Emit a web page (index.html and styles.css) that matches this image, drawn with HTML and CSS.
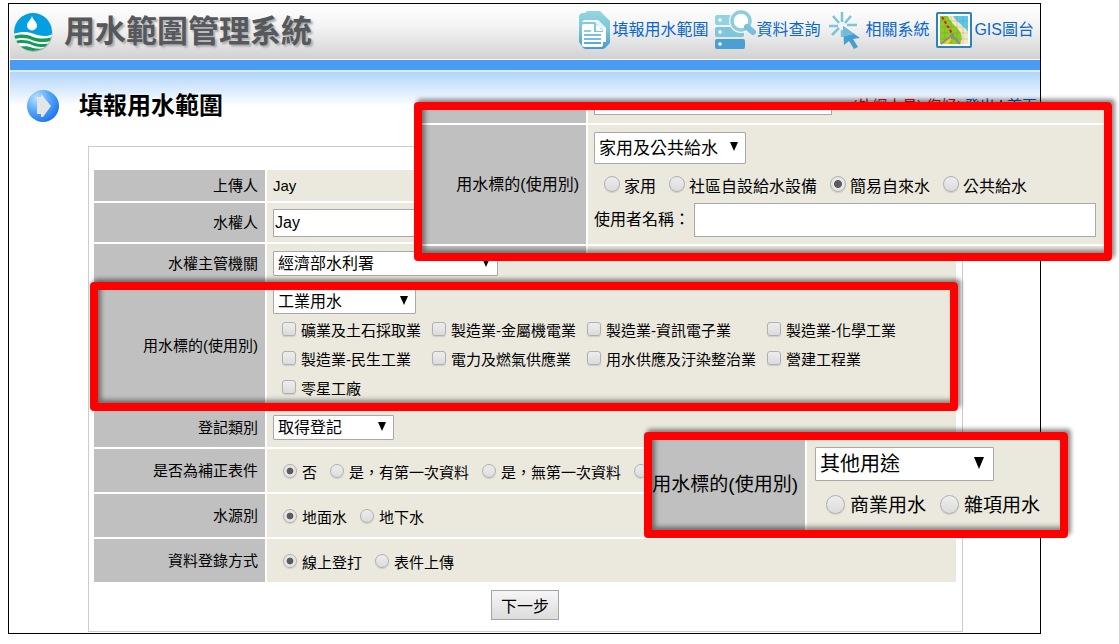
FILE: index.html
```html
<!DOCTYPE html>
<html lang="zh-Hant">
<head>
<meta charset="utf-8">
<meta name="viewport" content="width=device-width, initial-scale=1">
<title>用水範圍管理系統</title>
<link rel="stylesheet" href="styles.css">
</head>
<body>
<div class="page">
  <header class="header">
    <div class="brand">
      <svg class="brand-logo" viewBox="0 0 40 40" aria-hidden="true">
        <defs><clipPath id="disc"><circle cx="20" cy="20" r="19"/></clipPath></defs>
        <circle cx="20.500" cy="21" r="19" fill="#b5b5b5"/>
        <g clip-path="url(#disc)">
          <rect width="40" height="40" fill="#fff"/>
          <path d="M0 0h40v22c-7 3-13 2-19 0C13 19 8 20 0 22z" fill="#049fe0"/>
          <path d="M0 24c8-2 13-2 20 1 7 2 13 2 20 0v3.500c-7 2-13 2-20 0-7-3-12-3-20-1z" fill="#149c5a"/>
          <path d="M0 29.500c8-2 13-2 20 1 7 2 13 2 20 0v3c-7 2-13 2-20 0-7-3-12-3-20-1z" fill="#149c5a"/>
          <path d="M4 35c7-1 11-1 16 1 4 1 8 1 12 0v5H4z" fill="#149c5a"/>
          <path d="M19 4c1 4 5 6 5 9.500a5 5 0 0 1-10 0c0-3.500 4-5.500 5-9.500z" fill="#fff"/>
        </g>
      </svg>
      <span class="brand-name">用水範圍管理系統</span>
    </div>
    <nav class="menu">
      <a class="menu-item" href="#report">
        <svg class="icon-docs" viewBox="0 0 34 40" aria-hidden="true">
          <defs><linearGradient id="ink" x1="0" y1="0" x2="0" y2="40" gradientUnits="userSpaceOnUse"><stop offset="0" stop-color="#97d6de"/><stop offset=".5" stop-color="#7cc5dc"/><stop offset="1" stop-color="#3f97d2"/></linearGradient></defs>
          <path d="M10 1h12l10 10v22l-5 5q-1 1-3 1H8q-3 0-4-3l-3-4V7q0-3 3-4h3q1-2 3-2z" fill="url(#ink)"/>
          <path d="M7 10h13l8 8v14h-3V20l-8-8H4q1-2 3-2z" fill="#fff"/>
          <path d="M20 10v8h8z" fill="#e4f4f8"/>
          <path d="M6 14h10v8h9v13q0 2-2 2H6q-2 0-2-2V16q0-2 2-2z" fill="#fff"/>
          <path d="M18 14l7 7h-7z" fill="#fff"/>
          <path d="M6 21h7" stroke="#8ccfdd" stroke-width="2"/>
          <path d="M6 25h17M6 29h17" stroke="#78c0da" stroke-width="2"/>
          <path d="M6 33h17" stroke="#5cabd6" stroke-width="2"/>
        </svg>
        <span>填報用水範圍</span>
      </a>
      <a class="menu-item" href="#search">
        <svg class="icon-search" viewBox="0 0 41 40" aria-hidden="true">
          <rect x="0" y="5" width="20" height="10" rx="2" fill="#93d3df"/>
          <rect x="0" y="17" width="29" height="10" rx="2" fill="#7fc5dc"/>
          <rect x="0" y="29" width="30" height="10" rx="2" fill="#4ba0d3"/>
          <circle cx="5" cy="10" r="1.800" fill="#fff"/><circle cx="5" cy="22" r="1.800" fill="#fff"/><circle cx="5" cy="34" r="1.800" fill="#fff"/>
          <circle cx="26" cy="11" r="12" fill="#f7f7f7"/>
          <circle cx="26" cy="11" r="9" fill="#fff" stroke="#8bcede" stroke-width="3.500"/>
          <path d="M32 17l6 5" stroke="#78c0dc" stroke-width="6" stroke-linecap="round"/>
        </svg>
        <span>資料查詢</span>
      </a>
      <a class="menu-item menu-item-spaced" href="#systems">
        <svg class="icon-pointer" viewBox="0 0 32 40" aria-hidden="true">
          <path d="M13 2v10M4 6l6 7M22 6l-6 7M0 16h9M18 15h10M10 18l-7 7M13 20v7" stroke="#7cc5da" stroke-width="2.500" fill="none"/>
          <path d="M14 16l17 12-7 1 5 8-4 2-5-8-5 4z" fill="#469dd0"/>
          <path d="M14 16l11 8-11 3z" fill="#70bddb"/>
        </svg>
        <span>相關系統</span>
      </a>
      <a class="menu-item" href="#gis">
        <svg class="icon-map" viewBox="0 0 36 36" aria-hidden="true">
          <rect x="1" y="1" width="34" height="34" rx="1" fill="#fff" stroke="#2d83b3" stroke-width="2"/>
          <rect x="4" y="4" width="28" height="28" fill="#8bcb23"/>
          <path d="M12 4h20v28h-8c3-6 2-10-2-15-4-4-8-8-10-13z" fill="#f7e6c2"/>
          <path d="M17 4h15v16c-3-6-11-9-15-16z" fill="#5bc8ee"/>
          <path d="M4 32l10-9 3 3-5 6z" fill="#f3d32b"/>
          <path d="M9 4v28M15 4v28M21 4v28M27 4v28M4 9h28M4 15h28M4 21h28M4 27h28" stroke="#3a7b62" stroke-opacity=".2"/>
          <path d="M6 5l11 18" stroke="#e01b1b" stroke-width="2" stroke-dasharray="3 2"/>
          <path d="M5 32l11-9 8 9M16 23v4" fill="none" stroke="#8d8c86" stroke-width="2"/>
        </svg>
        <span>GIS圖台</span>
      </a>
    </nav>
  </header>
  <div class="bar"></div>

  <main class="main">
    <div class="title-row">
      <svg class="title-icon" viewBox="0 0 34 34" aria-hidden="true">
        <defs><radialGradient id="ball" cx=".3" cy=".25" r=".8"><stop offset="0" stop-color="#b8e2ff"/><stop offset=".5" stop-color="#59a8fb"/><stop offset="1" stop-color="#1e76ee"/></radialGradient></defs>
        <circle cx="17" cy="17" r="16" fill="url(#ball)"/>
        <path d="M11 8h4V5l10 12-8 11h-2v-3h-4z" fill="#e3e5e8"/>
      </svg>
      <h1 class="title">填報用水範圍</h1>
      <p class="user"><span class="user-name">(外網人員) 您好!</span> <a href="#logout">登出</a> | <a href="#home">首頁</a></p>
    </div>

    <form class="form">
      <div class="rows">
        <div class="row">
          <div class="label">上傳人</div>
          <div class="value">Jay</div>
        </div>
        <div class="row row-input">
          <label class="label" for="owner">水權人</label>
          <div class="value"><input class="text" id="owner" type="text" value="Jay"></div>
        </div>
        <div class="row row-input">
          <label class="label" for="agency">水權主管機關</label>
          <div class="value"><span class="select select-l"><select id="agency"><option>經濟部水利署</option></select></span></div>
        </div>
        <div class="row row-marked">
          <label class="label" for="usage">用水標的(使用別)</label>
          <div class="value value-stack">
            <span class="select select-m"><select id="usage"><option>工業用水</option></select></span>
            <div class="checks">
              <label class="option"><input type="checkbox"><span>礦業及土石採取業</span></label>
              <label class="option"><input type="checkbox"><span>製造業-金屬機電業</span></label>
              <label class="option"><input type="checkbox"><span>製造業-資訊電子業</span></label>
              <label class="option"><input type="checkbox"><span>製造業-化學工業</span></label>
              <label class="option"><input type="checkbox"><span>製造業-民生工業</span></label>
              <label class="option"><input type="checkbox"><span>電力及燃氣供應業</span></label>
              <label class="option"><input type="checkbox"><span>用水供應及汙染整治業</span></label>
              <label class="option"><input type="checkbox"><span>營建工程業</span></label>
              <label class="option"><input type="checkbox"><span>零星工廠</span></label>
            </div>
          </div>
        </div>
        <div class="row row-input">
          <label class="label" for="regtype">登記類別</label>
          <div class="value"><span class="select select-s"><select id="regtype"><option>取得登記</option></select></span></div>
        </div>
        <div class="row row-radio">
          <div class="label">是否為補正表件</div>
          <div class="value options">
            <label class="option"><input type="radio" name="fix" checked><span>否</span></label>
            <label class="option"><input type="radio" name="fix"><span>是，有第一次資料</span></label>
            <label class="option"><input type="radio" name="fix"><span>是，無第一次資料</span></label>
            <label class="option"><input type="radio" name="fix" aria-label="其他"></label>
          </div>
        </div>
        <div class="row row-radio">
          <div class="label">水源別</div>
          <div class="value options">
            <label class="option"><input type="radio" name="source" checked><span>地面水</span></label>
            <label class="option"><input type="radio" name="source"><span>地下水</span></label>
          </div>
        </div>
        <div class="row row-radio">
          <div class="label">資料登錄方式</div>
          <div class="value options">
            <label class="option"><input type="radio" name="entry" checked><span>線上登打</span></label>
            <label class="option"><input type="radio" name="entry"><span>表件上傳</span></label>
          </div>
        </div>
      </div>
      <button class="next" type="button">下一步</button>
    </form>
  </main>

  <section class="callout callout-home">
    <div class="strip strip-top"><div class="label"></div><div class="value"><div class="cut-field"></div></div></div>
    <div class="callout-row">
      <label class="label" for="usage-home">用水標的(使用別)</label>
      <div class="value value-stack">
        <span class="select"><select id="usage-home"><option>家用及公共給水</option></select></span>
        <div class="options">
          <label class="option"><input type="radio" name="home"><span>家用</span></label>
          <label class="option"><input type="radio" name="home"><span>社區自設給水設備</span></label>
          <label class="option"><input type="radio" name="home" checked><span>簡易自來水</span></label>
          <label class="option"><input type="radio" name="home"><span>公共給水</span></label>
        </div>
        <div class="field"><label for="username">使用者名稱：</label><input class="text" id="username" type="text"></div>
      </div>
    </div>
    <div class="strip strip-bottom"><div class="label"></div><div class="value"></div></div>
  </section>

  <section class="callout callout-other">
    <div class="callout-row">
      <label class="label" for="usage-other">用水標的(使用別)</label>
      <div class="value value-stack">
        <span class="select"><select id="usage-other"><option>其他用途</option></select></span>
        <div class="options">
          <label class="option"><input type="radio" name="other"><span>商業用水</span></label>
          <label class="option"><input type="radio" name="other"><span>雜項用水</span></label>
        </div>
      </div>
    </div>
  </section>
</div>
</body>
</html>
```
FILE: styles.css
```css
* { box-sizing: border-box; }

body {
  margin: 0;
  background: #fff;
  color: #000;
  font: 15px/20px "Liberation Sans", "Noto Sans CJK TC", sans-serif;
}

a { color: #0a5bb5; text-decoration: none; }

input, select, button { font-family: inherit; color: inherit; margin: 0; }

.page {
  position: relative;
  margin: 3px 78px 9px 8px;
  border: 1px solid #000;
}

/* Header */
.header {
  display: flex;
  justify-content: space-between;
  height: 55px;
  margin-left: 1px;
  padding: 0 6px 0 3px;
  background: linear-gradient(#fff, #f4f4f4 40%, #d2d2d2);
}

.brand { display: flex; align-items: center; gap: 11px; }
.brand-logo { width: 40px; height: 40px; }
.brand-name {
  color: #55585c;
  font-size: 31px;
  line-height: 40px;
  font-weight: 700;
  text-shadow: 2px 2px 2px #aaa;
}

.menu { display: flex; align-items: center; gap: 7px; padding-bottom: 3px; }
.menu-item {
  display: flex;
  align-items: center;
  color: #0a67cc;
  font-size: 16px;
  white-space: nowrap;
}
.menu-item-spaced { gap: 4px; margin-left: 2px; }
.icon-docs { width: 34px; height: 40px; }
.icon-search { width: 41px; height: 40px; }
.icon-pointer { width: 32px; height: 40px; }
.icon-map { width: 36px; height: 36px; margin-right: 2px; }

.bar {
  height: 13px;
  margin-left: 1px;
  border: solid #fff;
  border-width: 1px 0 2px;
  border-bottom-color: #dcecfd;
  background: #489cf5;
}

/* Content */
.main {
  margin-left: 1px;
  padding: 12px 3px 1px 16px;
  background: linear-gradient(#b0d5fb, #fff 34px) no-repeat;
}

.title-row { display: flex; align-items: center; height: 44px; }
.title-icon { width: 34px; height: 34px; }
.title { margin: 0 0 0 19px; font-size: 24px; line-height: 32px; }
.user { margin: 0 0 0 auto; white-space: nowrap; }
.user-name { color: #e01010; }

.form {
  display: flex;
  flex-direction: column;
  align-items: center;
  margin: 18px 74px 0 62px;
  padding: 23px 6px 11px 5px;
  border: 1px solid #ccc;
}

.rows { align-self: stretch; display: flex; flex-direction: column; gap: 2px; }

.row { display: grid; grid-template-columns: 171px 1fr; gap: 2px; min-height: 31px; }
.row-input { min-height: 39px; }
.row-radio { min-height: 43px; }

.label {
  display: flex;
  align-items: center;
  justify-content: flex-end;
  padding-right: 7px;
  background: #c0c0c0;
  white-space: nowrap;
}

.value {
  display: flex;
  align-items: center;
  min-width: 0;
  padding: 0 6px;
  background: #ebe9de;
}

.value-stack { flex-direction: column; align-items: flex-start; }

.row-marked { position: relative; min-height: 121px; }
.row-marked .value { padding-top: 4px; }

/* Controls */
.text {
  width: 225px;
  height: 28px;
  padding: 0 1px;
  border: 1px solid #a9a9a9;
  background: #fff;
  font-size: 16px;
}

.select { position: relative; display: inline-flex; height: 25px; font-size: 16px; }
.select select {
  appearance: none;
  width: 100%;
  padding: 0 4px;
  border: 1px solid #a9a9a9;
  border-radius: 1px;
  background: #fff;
  font-size: inherit;
}
.select::after {
  content: "";
  position: absolute;
  right: 8px;
  top: 7px;
  width: 8px;
  height: 9px;
  background: #000;
  clip-path: polygon(0 0, 100% 0, 50% 100%);
  pointer-events: none;
}
.select-l { width: 225px; }
.select-m { width: 143px; }
.select-s { width: 121px; }

.checks {
  display: grid;
  grid-template-columns: 150px 155px 180px auto;
  grid-auto-rows: 29px;
  padding-left: 9px;
}

.options { display: flex; align-items: center; gap: 13px; }
.row .options { padding-left: 16px; }

.option { display: flex; align-items: center; gap: 5px; white-space: nowrap; }
.option span { padding-top: 4px; }

.option input {
  appearance: none;
  flex: none;
  width: 14px;
  height: 14px;
  border: 1px solid #b0b0b0;
  border-radius: 3px;
  background: linear-gradient(#ededed, #dcdcdc);
  box-shadow: 0 1px 1px #ccc;
}
.option input[type="radio"] { border-radius: 50%; }
.option input[type="radio"]:checked {
  background: radial-gradient(circle, #5c5c5c 36%, #e6e6e6 44%);
}

.next {
  height: 30px;
  margin-top: 8px;
  padding: 0 9px;
  border: 1px solid #a5a5a5;
  background: linear-gradient(#f6f6f6, #dcdcdc);
  font-size: 16px;
}

/* Red frames */
.row-marked::after {
  content: "";
  position: absolute;
  inset: -3px -2px -5px -4px;
}
.row-marked::after,
.callout::after {
  border: 8px solid #f00;
  border-radius: 4px;
  box-shadow: 3px -3px 4px rgba(0, 0, 0, .45), inset 3px -3px 5px rgba(0, 0, 0, .45);
  pointer-events: none;
}

.callout {
  position: absolute;
  isolation: isolate;
  display: flex;
  flex-direction: column;
  gap: 2px;
  padding: 8px;
}
.callout::before { content: ""; position: absolute; inset: 8px; background: #fff; z-index: -1; }
.callout::after { content: ""; position: absolute; inset: 0; }

.callout-row, .strip { display: grid; gap: 2px; }

.callout-home { top: 98px; right: -72px; width: 698px; font-size: 16px; }
.callout-home .callout-row, .callout-home .strip { grid-template-columns: 164px 1fr; }
.callout-home .callout-row { min-height: 119px; }
.callout-home .value { padding: 0 8px 0 6px; }
.callout-home .value-stack { padding-top: 7px; }
.callout-home .select { height: 32px; width: 152px; font-size: 17px; }
.callout-home .select::after { top: 10px; }
.callout-home .options { height: 39px; padding-left: 10px; gap: 13px; }
.callout-home .option input { width: 16px; height: 16px; }
.callout-home .option { gap: 4px; }
.callout-home .option span { padding-top: 6px; }
.callout-home .field { display: flex; align-items: center; gap: 4px; align-self: stretch; }
.callout-home .text { flex: 1; width: auto; height: 34px; }
.strip-top { height: 13px; }
.strip-top .value { align-items: flex-start; }
.cut-field { width: 238px; height: 5px; border: 1px solid #a9a9a9; border-top: 0; background: #fff; }
.strip-bottom { height: 7px; }

.callout-other { top: 428px; right: -28px; width: 424px; font-size: 19px; }
.callout-other .callout-row { grid-template-columns: 153px 1fr; min-height: 90px; }
.callout-other .value { padding: 7px 8px 0; }
.callout-other .select { width: 179px; height: 34px; font-size: 20px; }
.callout-other .select::after { width: 10px; height: 12px; top: 10px; right: 10px; }
.callout-other .options { height: 46px; padding-left: 11px; gap: 14px; }
.callout-other .option input { width: 19px; height: 19px; }
```
